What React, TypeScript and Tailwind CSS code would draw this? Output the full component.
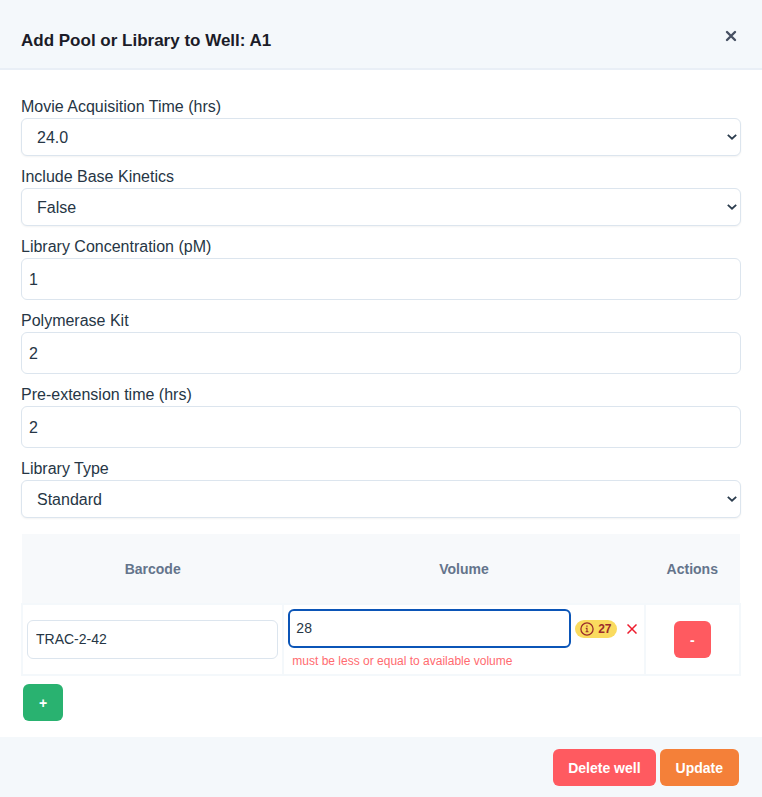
import type { ReactNode } from "react";

const fieldBorder = "rounded-md border border-[#dce5ee] bg-white text-[#263645]";

function Field({ id, label, children }: { id: string; label: string; children: ReactNode }) {
  return (
    <div>
      <label htmlFor={id} className="block h-6 text-base leading-[26px]">
        {label}
      </label>
      {children}
    </div>
  );
}

function SelectField({ id, label, options }: { id: string; label: string; options: string[] }) {
  return (
    <Field id={id} label={label}>
      <div className="relative">
        <select
          id={id}
          className={`${fieldBorder} block h-[38px] w-full appearance-none px-[15px] pt-[2px] text-base shadow-xs`}
        >
          {options.map((option) => (
            <option key={option}>{option}</option>
          ))}
        </select>
        <svg
          viewBox="0 0 10 6"
          className="pointer-events-none absolute top-4 right-1 h-[6px] w-[10px] text-[#2b3c4d]"
          fill="none"
          stroke="currentColor"
          strokeWidth="1.8"
          aria-hidden="true"
        >
          <path d="M0.8 0.9 L5 4.7 L9.2 0.9" />
        </svg>
      </div>
    </Field>
  );
}

function InputField({ id, label, value }: { id: string; label: string; value: string }) {
  return (
    <Field id={id} label={label}>
      <input
        id={id}
        type="text"
        defaultValue={value}
        className={`${fieldBorder} block h-[42px] w-full px-[7px] pt-[2px] text-base`}
      />
    </Field>
  );
}

export default function App() {
  return (
    <div className="bg-white font-['Liberation_Sans',Arial,sans-serif] text-[#263645]">
      <header className="flex items-start justify-between border-b-2 border-[#e9eff6] bg-[#f4f8fb] px-[21px] pt-[26px] pb-[14px]">
        <h1 className="pt-[2px] text-[17px] leading-[26px] font-bold text-[#1b1c28]">
          Add Pool or Library to Well: A1
        </h1>
        <button type="button" aria-label="Close" className="p-1 text-[#465062]">
          <svg viewBox="0 0 12 12" className="size-3" stroke="currentColor" strokeWidth="2.4" strokeLinecap="round">
            <path d="M2 2 L10 10 M10 2 L2 10" />
          </svg>
        </button>
      </header>

      <main className="px-[21px] pt-6 pb-4">
        <div className="flex flex-col gap-2">
          <SelectField id="movie-time" label="Movie Acquisition Time (hrs)" options={["24.0", "10.0", "15.0", "20.0", "30.0"]} />
          <SelectField id="base-kinetics" label="Include Base Kinetics" options={["False", "True"]} />
          <InputField id="concentration" label="Library Concentration (pM)" value="1" />
          <InputField id="polymerase-kit" label="Polymerase Kit" value="2" />
          <InputField id="pre-extension" label="Pre-extension time (hrs)" value="2" />
          <SelectField id="library-type" label="Library Type" options={["Standard"]} />
        </div>

        <table className="mt-4 w-full table-fixed border-collapse text-sm">
          <colgroup>
            <col className="w-[36.4%]" />
            <col className="w-[50.3%]" />
            <col className="w-[13.3%]" />
          </colgroup>
          <thead>
            <tr className="h-[70px] bg-[#f7f9fb] text-[#64748b]">
              <th scope="col">Barcode</th>
              <th scope="col">Volume</th>
              <th scope="col">Actions</th>
            </tr>
          </thead>
          <tbody>
            <tr className="h-[71px]">
              <td className="border-2 border-[#f4f8fb] px-1">
                <input
                  type="text"
                  aria-label="Barcode"
                  defaultValue="TRAC-2-42"
                  className={`${fieldBorder} block h-[39px] w-full px-2 pb-[2px] text-sm`}
                />
              </td>
              <td className="border-2 border-[#f4f8fb] px-1 py-1 align-top">
                <div className="flex items-center">
                  <input
                    type="text"
                    aria-label="Volume"
                    aria-invalid="true"
                    aria-describedby="volume-error"
                    defaultValue="28"
                    className="block h-[39px] min-w-0 flex-1 rounded-md border-2 border-[#0b55b7] bg-white px-[6px] pb-[2px] text-sm outline-none"
                  />
                  <span className="ml-1 flex h-[18px] items-center gap-1 rounded-full bg-[#fadb5f] px-[5px] text-xs font-bold text-[#9b2c2c]">
                    <svg viewBox="0 0 14 14" className="size-[14px]" fill="none" stroke="currentColor" strokeWidth="1.3" aria-hidden="true">
                      <circle cx="7" cy="7" r="6.1" />
                      <path d="M5.8 6.4 H7 V9.8 M5.6 9.8 H8.5" strokeWidth="1.1" />
                      <path d="M6.3 4.2 H7.6" strokeWidth="1.3" />
                    </svg>
                    27
                  </span>
                  <svg viewBox="0 0 10 10" className="mr-[3px] ml-[10px] size-[10px] text-[#ee1c2e]" stroke="currentColor" strokeWidth="1.5" role="img" aria-label="Invalid">
                    <path d="M0.5 0.5 L9.5 9.5 M9.5 0.5 L0.5 9.5" />
                  </svg>
                </div>
                <p id="volume-error" className="px-1 pt-1 text-xs leading-[18px] text-[#ff6b70]">
                  must be less or equal to available volume
                </p>
              </td>
              <td className="border-2 border-[#f4f8fb] text-center">
                <button type="button" aria-label="Remove row" className="size-[37px] rounded-md bg-[#ff5a60] text-sm font-bold text-white">
                  -
                </button>
              </td>
            </tr>
          </tbody>
        </table>

        <button type="button" aria-label="Add row" className="mt-2 ml-[2px] block h-[37px] w-10 rounded-md bg-[#29b270] text-sm font-bold text-white">
          +
        </button>
      </main>

      <footer className="flex justify-end gap-1 bg-[#f4f8fb] px-[23px] pt-3 pb-[11px] text-sm font-bold text-white">
        <button type="button" className="h-[37px] rounded-md bg-[#ff5a60] px-[15px]">
          Delete well
        </button>
        <button type="button" className="h-[37px] rounded-md bg-[#f48039] px-4">
          Update
        </button>
      </footer>
    </div>
  );
}
